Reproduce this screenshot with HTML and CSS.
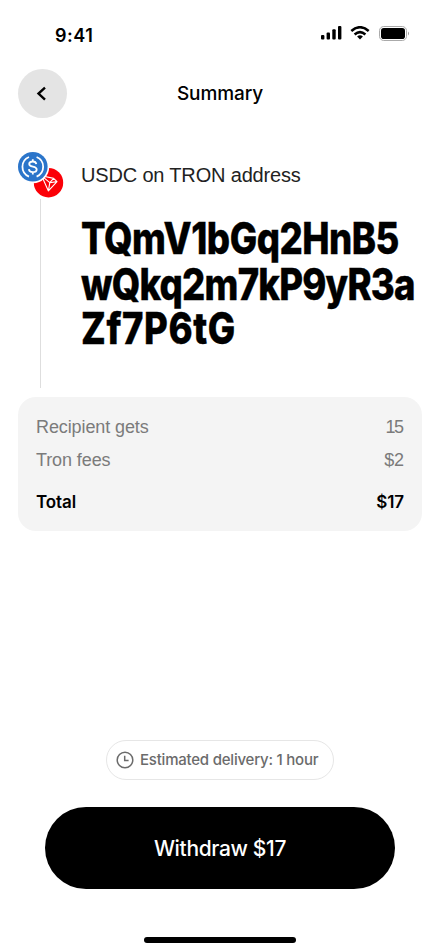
FILE: index.html
```html
<!DOCTYPE html>
<html lang="en">
<head>
<meta charset="utf-8">
<title>Summary</title>
<link rel="stylesheet" href="styles.css">
</head>
<body>
<main class="screen">
  <div class="status">
    <span class="time">9:41</span>
    <svg class="indicators" width="90" height="16" viewBox="0 0 90 16">
      <rect x="1" y="9" width="3.4" height="4.5" rx="1"/>
      <rect x="6.6" y="6.5" width="3.4" height="7" rx="1"/>
      <rect x="12.3" y="3.2" width="3.4" height="10.3" rx="1"/>
      <rect x="18" y="0" width="3.4" height="13.5" rx="1"/>
      <g fill="none" stroke="#000" stroke-width="2.6">
        <path d="M31.3 4.9Q40 -2.4 48.7 4.9"/>
        <path d="M34.6 8.4Q40 3.9 45.4 8.4"/>
      </g>
      <path d="M37.1 10.5Q40 8.2 42.9 10.5L40 13.5Z"/>
      <rect x="59.5" y="0.5" width="27" height="14" rx="4.2" fill="none" stroke="#aaa"/>
      <rect x="61" y="2" width="24" height="11" rx="2.8"/>
      <path d="M88 5.5Q90 7.5 88 9.5Z" fill="#999"/>
    </svg>
  </div>
  <header class="topbar">
    <button class="back" aria-label="Back">
      <svg width="49" height="49" viewBox="0 0 49 49"><path d="M27 18.7L20.5 24.5L27 30.7" fill="none" stroke="#000" stroke-width="2.4"/></svg>
    </button>
    <h1 class="title">Summary</h1>
  </header>
  <section class="recipient">
    <div class="rail">
      <svg class="coins" width="47" height="47" viewBox="0 0 47 47">
        <circle cx="30.5" cy="30.7" r="14.7" fill="#fb0007"/>
        <g fill="none" stroke="#fff" stroke-width="1.1" stroke-linejoin="round">
          <path d="M23.6 23.8L35.6 26.4L39 29.6L30.4 38.9ZM23.6 23.8L31.8 30.7L30.4 38.9M31.8 30.7L35.6 26.4M31.8 30.7L39 29.6"/>
        </g>
        <circle cx="15" cy="15" r="16.2" fill="#fff"/>
        <circle cx="14.8" cy="14.8" r="14.8" fill="#2b75ca"/>
        <g fill="none" stroke="#fff" stroke-width="1.8">
          <path d="M11 5A10.6 10.6 0 0 0 11 24.6M18.6 5A10.6 10.6 0 0 1 18.6 24.6"/>
          <path d="M18.3 12.1C18 10.2 16.6 9.5 14.8 9.5C12.5 9.5 11.2 10.6 11.2 12.1C11.2 15.8 18.7 13.6 18.7 17.5C18.7 19.2 17 20.2 14.8 20.2C12.6 20.2 11.1 19.3 10.9 17.2M14.8 7.2V9.8M14.8 20V22.6"/>
        </g>
      </svg>
      <div class="line"></div>
    </div>
    <div class="details">
      <p class="network">USDC on TRON address</p>
      <p class="address">
        <span class="row-a">TQmV1bGq2HnB5</span>
        <span class="row-b">wQkq2m7kP9yR3a</span>
        <span class="row-c">Zf7P6tG</span>
      </p>
    </div>
  </section>
  <dl class="card">
    <div class="item"><dt>Recipient gets</dt><dd class="tight">15</dd></div>
    <div class="item"><dt>Tron fees</dt><dd>$2</dd></div>
    <div class="item total"><dt>Total</dt><dd>$17</dd></div>
  </dl>
  <footer class="actions">
    <div class="estimate">
      <svg width="18" height="18" viewBox="0 0 18 18" fill="none" stroke="#6b6b6b" stroke-width="1.5"><circle cx="9" cy="9" r="7.8"/><path d="M8.7 4.8V9.5H12.6"/></svg>
      <span>Estimated delivery: 1 hour</span>
    </div>
    <button class="withdraw">Withdraw $17</button>
    <div class="home"></div>
  </footer>
</main>
</body>
</html>
```
FILE: styles.css
```css
* { box-sizing: border-box; margin: 0; padding: 0; }
body { background: #fff; color: #000; font-family: Inter, "Liberation Sans", sans-serif; }
button { border: 0; font: inherit; }
.screen { width: 440px; height: 952px; display: flex; flex-direction: column; overflow: hidden; }
.status { height: 69px; padding: 26px 30px 0 55px; display: flex; justify-content: space-between; align-items: flex-start; }
.time { font-size: 18px; line-height: 20px; font-weight: 600; letter-spacing: .5px; }
.indicators { display: block; }
.topbar { height: 50px; padding: 0 18px; display: grid; grid-template-columns: 50px 1fr 50px; align-items: start; }
.back { width: 49px; height: 49px; border-radius: 50%; background: #e4e4e4; }
.back svg { display: block; }
.title { margin-top: 13px; font-size: 19px; line-height: 24px; font-weight: 500; letter-spacing: -.1px; text-align: center; }
.recipient { height: 278px; padding: 33px 0 0 18px; display: flex; gap: 16px; }
.rail { width: 47px; height: 236px; display: flex; flex-direction: column; }
.coins { display: block; flex: none; }
.line { width: 1px; flex: 1; margin-left: 22px; background: #dedede; }
.network { margin-top: 10px; font-family: "Liberation Sans", sans-serif; font-size: 20px; line-height: 26px; letter-spacing: -.17px; color: #222; white-space: nowrap; }
.address { margin-top: 28px; font-size: 43.5px; line-height: 45px; font-weight: 800; }
.address span { display: block; width: max-content; transform-origin: left; transform: scaleX(.84); -webkit-text-stroke: .4px #000; letter-spacing: -.6px; }
.address .row-b { padding-top: 1px; letter-spacing: -.95px; }
.address .row-c { margin-top: -1px; letter-spacing: .7px; }
.card { width: 404px; height: 134px; margin-left: 18px; padding: 17px 18px; border-radius: 18px; background: #f4f4f4; font-family: "Liberation Sans", sans-serif; }
.item { display: flex; justify-content: space-between; height: 33px; font-size: 18px; line-height: 26px; letter-spacing: -.1px; color: #7b7b7b; }
.item .tight { letter-spacing: -1.5px; margin-right: 1.5px; }
.total { margin-top: 9px; color: #000; font-family: Inter, sans-serif; font-weight: 600; font-size: 17px; }
.actions { margin-top: auto; display: flex; flex-direction: column; align-items: center; }
.estimate { width: 228px; height: 40px; padding: 0 0 1px 9px; border: 1px solid #e6e6e6; border-radius: 20px; display: flex; align-items: center; gap: 6px; font-size: 15px; font-weight: 500; letter-spacing: -.22px; color: #6b6b6b; white-space: nowrap; }
.withdraw { width: 350px; height: 82px; margin-top: 27px; border-radius: 41px; background: #000; color: #fff; font-size: 21px; font-weight: 500; letter-spacing: -.35px; }
.home { width: 152px; height: 6px; margin: 48px 0 9px; border-radius: 3px; background: #000; }
```
